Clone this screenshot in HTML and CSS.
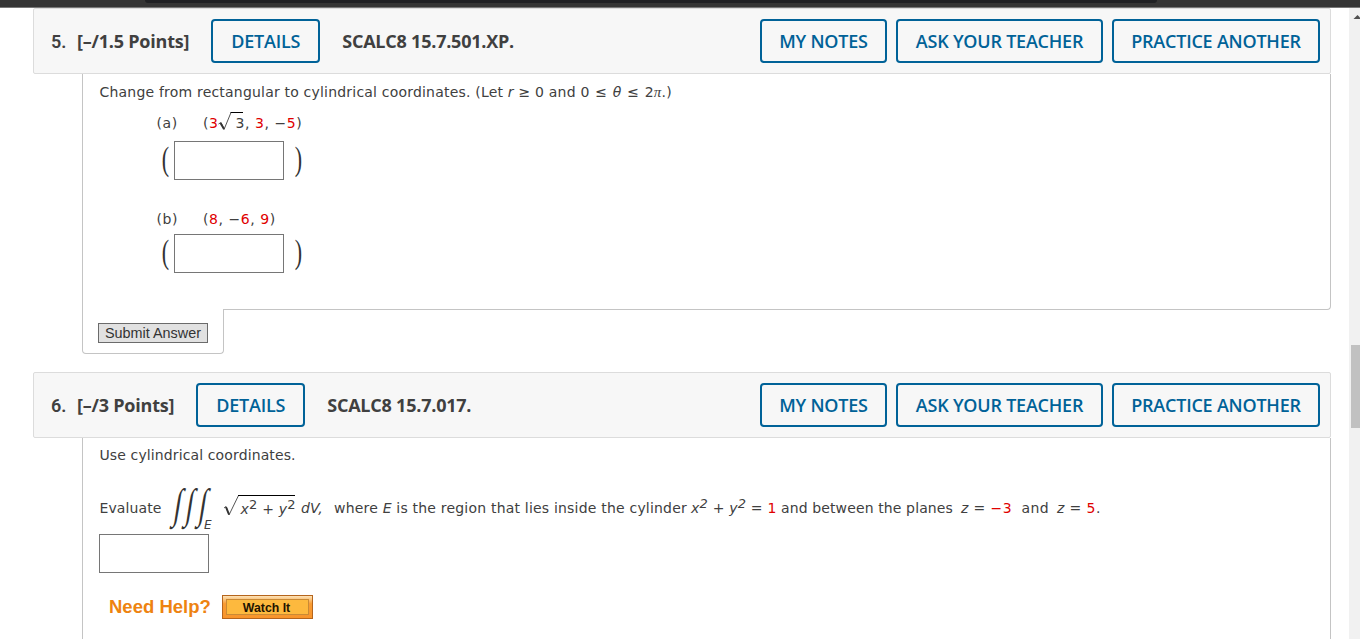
FILE: index.html
```html
<!DOCTYPE html>
<html lang="en">
<head>
    <meta charset="UTF-8">
    <meta name="viewport" content="width=device-width, initial-scale=1.0">
    <title>Homework - Cylindrical Coordinates</title>
    <link rel="stylesheet" href="styles.css">
</head>
<body>
    <div class="topbar">
        <div class="topbar-tab"></div>
    </div>

    <div class="page">
        <main class="questions">
            <section class="question">
                <header class="question-header">
                    <span class="number">5.</span>
                    <span class="points">[–/1.5 Points]</span>
                    <button class="btn">DETAILS</button>
                    <span class="code">SCALC8 15.7.501.XP.</span>
                    <div class="actions">
                        <button class="btn notes">MY NOTES</button>
                        <button class="btn teacher">ASK YOUR TEACHER</button>
                        <button class="btn practice">PRACTICE ANOTHER</button>
                    </div>
                </header>
                <div class="question-body first">
                    <p class="prompt">Change from rectangular to cylindrical coordinates. (Let <i>r</i> ≥ 0 and <span class="range">0 ≤ <i>θ</i> ≤ 2<i class="pi">π</i>.)</span></p>
                    <div class="part">
                        <div class="part-line">
                            <span class="label">(a)</span>
                            <span>(<b>3</b></span>
                            <svg class="root" width="26" height="20" viewBox="0 0 26 20">
                                <path d="M0.5 12 L3 10.5 L6 17.5 L13 0.5" fill="none" stroke="#555" stroke-width="1"/>
                                <path d="M2.5 11 L6 17" stroke="#333" stroke-width="2"/>
                                <path d="M12.5 0.5 H25" stroke="#000" stroke-width="1"/>
                            </svg>
                            <span class="radicand">3</span>
                            <span>, <b>3</b>, −<b>5</b>)</span>
                        </div>
                        <div class="answer">
                            <span class="paren">(</span>
                            <input class="blank" type="text">
                            <span class="paren right">)</span>
                        </div>
                    </div>
                    <div class="part part-b">
                        <div class="part-line">
                            <span class="label">(b)</span>
                            <span>(<b>8</b>, −<b>6</b>, <b>9</b>)</span>
                        </div>
                        <div class="answer">
                            <span class="paren">(</span>
                            <input class="blank" type="text">
                            <span class="paren right">)</span>
                        </div>
                    </div>
                </div>
                <div class="submit-tab">
                    <button class="submit">Submit Answer</button>
                </div>
            </section>

            <section class="question">
                <header class="question-header">
                    <span class="number">6.</span>
                    <span class="points">[–/3 Points]</span>
                    <button class="btn">DETAILS</button>
                    <span class="code">SCALC8 15.7.017.</span>
                    <div class="actions">
                        <button class="btn notes">MY NOTES</button>
                        <button class="btn teacher">ASK YOUR TEACHER</button>
                        <button class="btn practice">PRACTICE ANOTHER</button>
                    </div>
                </header>
                <div class="question-body second">
                    <p class="prompt short">Use cylindrical coordinates.</p>
                    <div class="formula">
                        <span class="evaluate">Evaluate</span>
                        <span class="integral">∫</span>
                        <span class="integral">∫</span>
                        <span class="integral">∫</span>
                        <i class="region">E</i>
                        <div class="sqrt">
                            <svg width="16" height="22" viewBox="0 0 16 22">
                                <path d="M1 13 L3 11.5 L6 20 L15.5 0.5" fill="none" stroke="#555" stroke-width="1"/>
                                <path d="M3 12 L6 19.5" stroke="#333" stroke-width="2"/>
                            </svg>
                            <span class="under"><i>x</i><sup>2</sup> + <i>y</i><sup>2</sup></span>
                        </div>
                        <i class="dv">dV,</i>
                        <span class="where">where <i>E</i> is the region that lies inside the cylinder</span>
                        <span class="equation"><i>x</i><sup><i>2</i></sup> + <i>y</i><sup><i>2</i></sup> = <b>1</b></span>
                        <span class="between">and between the planes</span>
                        <span class="z1"><i>z</i> = <b>−3</b></span>
                        <span class="and">and</span>
                        <span><i>z</i> = <b>5</b>.</span>
                    </div>
                    <input class="blank" type="text">
                    <div class="help">
                        <span class="help-label">Need Help?</span>
                        <button class="watch"><span>Watch It</span></button>
                    </div>
                </div>
            </section>
        </main>

        <div class="scrollbar">
            <svg class="arrow" width="11" height="6" viewBox="0 0 11 6"><path d="M4.5 5 L8.5 1 L12.5 5 Z" fill="#505050"/></svg>
            <div class="thumb"></div>
        </div>
    </div>
</body>
</html>
```
FILE: styles.css
```css
* {
    margin: 0;
    padding: 0;
    box-sizing: border-box;
}

body {
    height: 639px;
    overflow: hidden;
    background: #fff;
    color: #404040;
    font-family: "DejaVu Sans", Verdana, sans-serif;
    font-size: 14px;
}

b {
    font-weight: normal;
    color: #e00000;
}

.topbar {
    height: 8px;
    background: #353535;
    border-bottom: 1px solid #777;
    padding-left: 145px;
}

.topbar-tab {
    width: 1012px;
    height: 3px;
    background: #202124;
    border-radius: 0 0 8px 8px;
}

.page {
    display: flex;
    height: 631px;
}

.questions {
    width: 1298px;
    margin-left: 33px;
    flex-shrink: 0;
}

.question {
    margin-bottom: 18px;
}

.question-header {
    display: flex;
    align-items: center;
    height: 66px;
    padding: 0 10px 0 17px;
    background: #f7f7f7;
    border: 1px solid #dcdcdc;
    border-radius: 2px;
    font-family: "Open Sans", sans-serif;
    font-size: 18px;
    font-weight: 600;
    letter-spacing: -0.22px;
}

.number {
    width: 26px;
    font-family: Roboto, sans-serif;
    font-weight: 600;
    letter-spacing: 0;
}

.points {
    margin-right: 22px;
    font-weight: 700;
    white-space: nowrap;
}

.code {
    margin-left: 22px;
    font-weight: 700;
}

.btn {
    width: 109px;
    height: 44px;
    background: transparent;
    border: 2px solid #006298;
    border-radius: 4px;
    color: #006298;
    font-family: "Open Sans", sans-serif;
    font-size: 18px;
    font-weight: 550;
    letter-spacing: -0.22px;
    white-space: nowrap;
}

.actions {
    display: flex;
    gap: 9px;
    margin-left: auto;
}

.notes {
    width: 127px;
}

.teacher {
    width: 207px;
}

.practice {
    width: 208px;
}

.question-body {
    margin-left: 49px;
    padding-left: 16.5px;
    border: 1px solid #c4c4c4;
    border-top: none;
}

.first {
    height: 236px;
    padding-top: 9px;
    border-radius: 0 0 4px 0;
}

.second {
    height: 220px;
    padding-top: 8px;
}

.prompt {
    height: 18px;
    line-height: 18px;
    letter-spacing: 0.2px;
    white-space: nowrap;
}

.short {
    letter-spacing: 0.12px;
}

.range {
    word-spacing: 1px;
}

.pi {
    font-family: "Liberation Serif", serif;
    font-size: 15px;
}

.part {
    margin-left: 56.5px;
    height: 94px;
    padding-top: 12px;
}

.part-b {
    padding-top: 14px;
}

.part-line {
    display: flex;
    align-items: center;
    height: 20px;
    letter-spacing: 0.55px;
    white-space: nowrap;
}

.label {
    width: 47px;
    padding-left: 0.5px;
}

.root {
    margin-top: -2px;
}

.radicand {
    margin-left: -9px;
}

.answer {
    display: flex;
    align-items: center;
    height: 39px;
    margin-top: 8px;
    padding-left: 3px;
}

.part-b .answer {
    margin-top: 5px;
}

.paren {
    width: 15px;
    padding-bottom: 3px;
    font-family: "Liberation Serif", serif;
    font-size: 34px;
    line-height: 36px;
    color: #333;
    transform: scaleX(0.65);
}

.right {
    margin-left: 8px;
}

.blank {
    display: block;
    width: 110px;
    height: 39px;
    border: 1px solid #767676;
    background: #fff;
}

.second .blank {
    margin-left: -0.5px;
}

.submit-tab {
    position: relative;
    width: 142px;
    height: 45px;
    margin: -1px 0 0 49px;
    padding: 14px 0 0 15px;
    background: #fff;
    border: 1px solid #c4c4c4;
    border-top: none;
    border-radius: 0 0 4px 4px;
}

.submit {
    display: block;
    width: 110px;
    height: 20px;
    background: #e1e1e1;
    border: 1px solid #6b6b6b;
    color: #333;
    font-family: "Liberation Sans", Arial, sans-serif;
    font-size: 14.4px;
    line-height: 18px;
}

.formula {
    display: flex;
    align-items: center;
    height: 50px;
    margin: 19px 0 1px;
    letter-spacing: 0.2px;
    white-space: nowrap;
}

.formula sup {
    font-size: 13px;
    line-height: 0;
    vertical-align: 5px;
}

.evaluate {
    width: 72px;
    letter-spacing: 0.1px;
}

.integral {
    width: 12.5px;
    font-family: "Liberation Serif", serif;
    font-size: 42px;
    line-height: 44px;
    padding-bottom: 8px;
    color: #333;
    transform: skewX(-9deg) scaleX(0.65);
}

.region {
    width: 19px;
    margin: 33px 0 0 -5px;
    font-size: 12px;
}

.sqrt {
    display: flex;
    width: 78px;
}

.under {
    width: 57px;
    margin-left: -1px;
    padding-left: 2.5px;
    border-top: 1px solid #000;
    line-height: 26px;
}

.dv {
    width: 33px;
}

.where {
    width: 357px;
}

.equation {
    width: 90px;
}

.between {
    width: 180px;
    letter-spacing: 0.12px;
}

.z1 {
    width: 60.5px;
}

.and {
    width: 35.5px;
}

.z1,
.and,
.and + span {
    letter-spacing: 0.4px;
}

.help {
    display: flex;
    align-items: center;
    margin-top: 22px;
    padding-left: 9.5px;
}

.help-label {
    width: 113px;
    color: #ee8310;
    font-family: "Liberation Sans", Arial, sans-serif;
    font-size: 18.5px;
    font-weight: bold;
}

.watch {
    width: 91px;
    height: 24px;
    padding: 3px;
    background: linear-gradient(#fde3b8, #f99c33 35%, #f8952b);
    border: 1px solid #b5651d;
}

.watch span {
    display: block;
    height: 16px;
    padding-right: 2px;
    background: #fdb93e;
    border: 1px solid #c98a35;
    color: #1f1400;
    font-family: "Liberation Sans", Arial, sans-serif;
    font-size: 12.3px;
    font-weight: bold;
    line-height: 16px;
}

.scrollbar {
    width: 11px;
    margin-left: 18px;
    padding-top: 6px;
    background: #f1f1f1;
    overflow: hidden;
}

.arrow {
    display: block;
}

.thumb {
    height: 83px;
    margin: 325px 0 0 2px;
    background: #c1c1c1;
}
```
